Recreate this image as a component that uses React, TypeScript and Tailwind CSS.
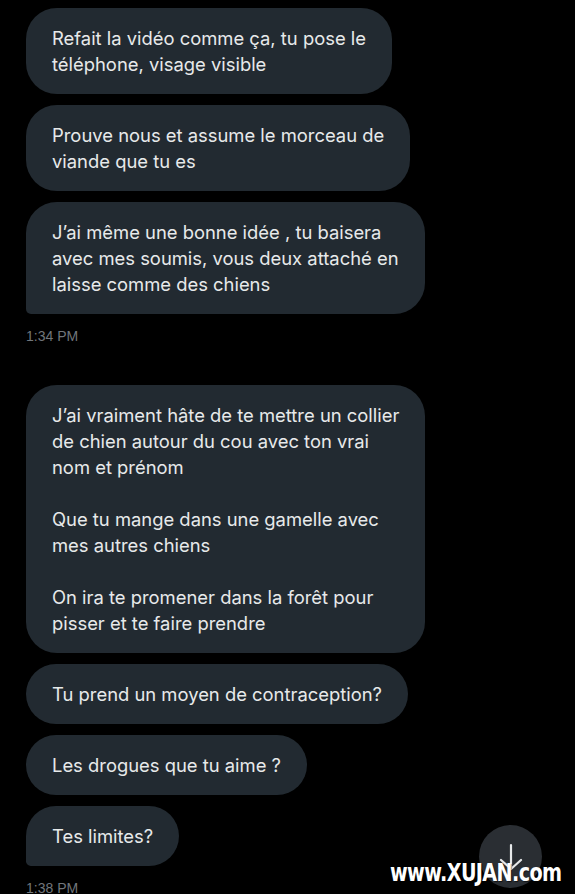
import React from "react";

type Msg = { lines: string[][]; last?: boolean };

const groups: { time: string; msgs: Msg[] }[] = [
  {
    time: "1:34 PM",
    msgs: [
      { lines: [["Refait la vidéo comme ça, tu pose le", "téléphone, visage visible"]] },
      { lines: [["Prouve nous et assume le morceau de", "viande que tu es"]] },
      {
        lines: [["J’ai même une bonne idée , tu baisera", "avec mes soumis, vous deux attaché en", "laisse comme des chiens"]],
        last: true,
      },
    ],
  },
  {
    time: "1:38 PM",
    msgs: [
      {
        lines: [
          ["J’ai vraiment hâte de te mettre un collier", "de chien autour du cou avec ton vrai", "nom et prénom"],
          ["Que tu mange dans une gamelle avec", "mes autres chiens"],
          ["On ira te promener dans la forêt pour", "pisser et te faire prendre"],
        ],
      },
      { lines: [["Tu prend un moyen de contraception?"]] },
      { lines: [["Les drogues que tu aime ?"]] },
      { lines: [["Tes limites?"]], last: true },
    ],
  },
];

const Bubble = ({ msg }: { msg: Msg }) => (
  <div
    className={
      "w-fit bg-[#222a31] text-[#e7e9ea] text-[18.4px] leading-[26px] px-[26px] py-[17px] rounded-[31px] " +
      (msg.last ? "rounded-bl-[5px]" : "")
    }
  >
    {msg.lines.map((para, i) => (
      <p key={i} className={i > 0 ? "mt-[26px]" : ""}>
        {para.map((l, j) => (
          <span key={j} className="block whitespace-nowrap">
            {l}
          </span>
        ))}
      </p>
    ))}
  </div>
);

export default function App() {
  return (
    <div className="relative h-[894px] w-[575px] overflow-hidden bg-black font-['Inter',sans-serif]">
      <div className="flex flex-col pl-[26px] pt-[8px]">
        {groups.map((g, gi) => (
          <div key={gi} className={gi > 0 ? "mt-[39px]" : ""}>
            <div className="flex flex-col gap-[11px]">
              {g.msgs.map((m, mi) => (
                <Bubble key={mi} msg={m} />
              ))}
            </div>
            <div className="mt-[12px] text-[14px] leading-[20px] text-[#71767b] font-['Liberation_Sans',sans-serif]">
              {g.time}
            </div>
          </div>
        ))}
      </div>

      {/* scroll to bottom */}
      <div className="absolute left-[479px] top-[825px] flex h-[63px] w-[63px] items-center justify-center rounded-full bg-[#2a2e33]">
        <svg width="26" height="30" viewBox="0 0 26 30" fill="none" stroke="#e7e9ea" strokeWidth="2.2" strokeLinecap="round" strokeLinejoin="round">
          <path d="M13 3v24" />
          <path d="M3 18l10 9 10-9" />
        </svg>
      </div>

      {/* watermark */}
      <div className="absolute left-[390px] top-[860px] origin-left scale-x-[0.8] text-[24px] leading-[26px] font-black text-white tracking-[-0.8px] font-['DejaVu_Sans','Liberation_Sans',sans-serif] [text-shadow:1px_1px_1px_rgba(0,0,0,0.6)]">
        www.XUJAN.com
      </div>
    </div>
  );
}
